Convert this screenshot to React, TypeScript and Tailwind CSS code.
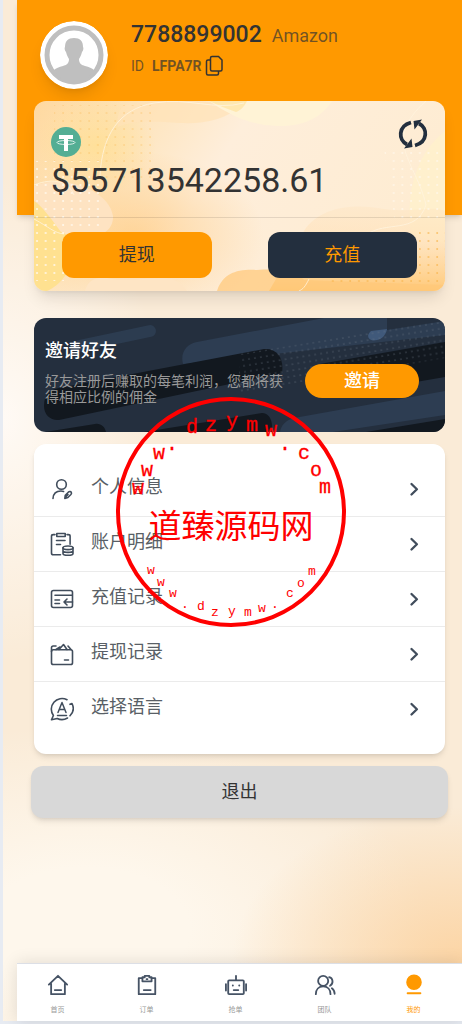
import type { ReactNode } from 'react';
import clsx from 'clsx';

type IconProps = { children: ReactNode; className?: string; strokeWidth?: number };

const Icon: React.FC<IconProps> = ({ children, className = 'size-6', strokeWidth = 1.6 }) => (
  <svg
    viewBox="0 0 24 24"
    fill="none"
    stroke="currentColor"
    strokeWidth={strokeWidth}
    strokeLinecap="round"
    strokeLinejoin="round"
    className={className}
    aria-hidden="true"
  >
    {children}
  </svg>
);

const menuItems = [
  {
    label: '个人信息',
    icon: (
      <>
        <circle cx="11.5" cy="7.5" r="4.8" />
        <path d="M3 21.500c.3-5 3.500-7.500 8-7.500 1 0 1.900.1 2.600.4" />
        <path d="m14.800 21.400.5-3.200 3-3c1-.9 2.500-.9 3 .1.400.8.2 1.500-.4 2.200l-3 3zM18 17.500l-1.800 1.900" />
      </>
    ),
  },
  {
    label: '账户明细',
    icon: (
      <>
        <path d="M5 2.600H3.300c-1 0-1.800.6-1.800 1.600v17c0 1 .8 1.600 1.800 1.600H10.500M17 2.600h1.300c1 0 1.800.6 1.800 1.600v8" />
        <path d="M6.800 4.500v-3h8.400v3zM6.500 8.500H15M6.500 12.500h4" />
        <ellipse cx="18" cy="15.800" rx="5" ry="1.800" />
        <path d="M13 15.800v5.600c0 1 2.200 1.800 5 1.800s5-.8 5-1.800v-5.600M13 18.600c0 1 2.200 1.800 5 1.800s5-.8 5-1.800" />
      </>
    ),
  },
  {
    label: '充值记录',
    icon: (
      <>
        <rect x="1.500" y="3.500" width="21" height="17" rx="2" />
        <path d="M5 8.200h17M5 13h4.500M5 16.500h4.500M22.500 15H14M17 12l-3 3 3 3" />
      </>
    ),
  },
  {
    label: '提现记录',
    icon: (
      <>
        <rect x="1.500" y="7.800" width="21" height="14.700" rx="1.800" />
        <path d="M1.500 9.500V5.800c0-1.200.6-1.800 1.700-1.800H6M6 7.500l4-2.500M9 7.500l4.500-5 3.500 5M18 4l3 3.500M14.500 18h4" />
      </>
    ),
  },
  {
    label: '选择语言',
    icon: (
      <>
        <path d="M17 2.700A10.700 10.700 0 0 0 3.400 18.500L1.500 22.800l5.700-1.300A10.700 10.700 0 0 0 17.500 21M20 18.800a10.700 10.700 0 0 0 2-12.300l-2 .8" />
        <path d="m8 15.500 4-10 4 10M9.300 12.500h5.400M7.500 18.500h9" strokeWidth="1.500" />
      </>
    ),
  },
];

const tabs = [
  {
    label: '首页',
    icon: <path d="m2 11.500 10-9.500 10 9.500M4.500 10.500v11.500h15v-11.500M8.500 17.500h7" />,
  },
  {
    label: '订单',
    icon: (
      <>
        <path d="M7 4.500H3v17.500h18V4.500h-4M8.500 17.500h7.500" />
        <path d="M9.500 2h5v1.500h2.500v4.500H7V3.500h2.500zM11.500 5.500h1" />
      </>
    ),
  },
  {
    label: '抢单',
    icon: (
      <>
        <rect x="3.500" y="7" width="17" height="15" rx="1" />
        <path d="M12 6.500V2M1 11v7M23 11v7M8.500 12.500h.1M15.500 12.500h.1M9.500 17.500h5" />
      </>
    ),
  },
  {
    label: '团队',
    icon: (
      <>
        <circle cx="10" cy="7.500" r="5.500" />
        <path d="M2 22c0-5 3.200-8.500 8-8.500s8 3.500 8 8.500M16.500 3.500c4.500 1 5 7 1 9.300M19.500 15.500c2 1.500 3 3.500 3 6" />
      </>
    ),
  },
  {
    label: '我的',
    active: true,
    icon: (
      <>
        <circle cx="12" cy="9" r="7.500" fill="currentColor" />
        <path d="M5 21h14" />
      </>
    ),
  },
];

// letters of the stamp: glyph, centre x, baseline y
const stampTop: [string, number, number][] = [
  ['w', 22, 97], ['w', 31, 79], ['w', 43, 62], ['.', 56, 53], ['d', 76, 36], ['z', 95, 34], ['y', 116, 30],
  ['m', 136, 34], ['w', 155, 39], ['.', 169, 53], ['c', 188, 62], ['o', 200, 79], ['m', 209, 96],
];
const stampBottom: [string, number, number][] = [
  ['w', 35, 177], ['w', 45, 189], ['w', 57, 200], ['.', 69, 211], ['d', 85, 213], ['z', 99, 219], ['y', 116, 218],
  ['m', 132, 219], ['w', 146, 215], ['.', 159, 211], ['c', 174, 200], ['o', 185, 190], ['m', 196, 178],
];

const Stamp = () => (
  <svg
    viewBox="0 0 230 230"
    fill="#f00"
    textAnchor="middle"
    className="pointer-events-none absolute top-[397px] left-1/2 size-[230px] -translate-x-1/2"
  >
    <circle cx="115" cy="115" r="113" fill="none" stroke="#f00" strokeWidth="4" />
    <g fontFamily="Liberation Mono, monospace" fontSize="20" stroke="#f00" strokeWidth="0.300">
      {stampTop.map(([c, x, y]) => <text key={x} x={x} y={y}>{c}</text>)}
    </g>
    <g fontFamily="Liberation Mono, monospace" fontSize="13">
      {stampBottom.map(([c, x, y]) => <text key={x} x={x} y={y}>{c}</text>)}
    </g>
    <text x="115" y="141" fontFamily="Noto Sans CJK SC, sans-serif" fontSize="33">道臻源码网</text>
  </svg>
);

const WalletArt = () => (
  <svg viewBox="0 0 411 190" preserveAspectRatio="none" className="absolute inset-0 size-full" aria-hidden="true">
    <defs>
      <linearGradient id="walletBase" x1="0" y1="0" x2="1" y2="0.300">
        <stop offset="0" stopColor="#ffd9a0" />
        <stop offset="0.220" stopColor="#fee3b8" />
        <stop offset="0.500" stopColor="#feeedb" />
        <stop offset="1" stopColor="#feecd2" />
      </linearGradient>
      <linearGradient id="walletWarm" x1="0" y1="0" x2="0" y2="1">
        <stop offset="0" stopColor="#ffe4c0" stopOpacity="0.400" />
        <stop offset="0.400" stopColor="#ffe2ba" stopOpacity="0.700" />
        <stop offset="1" stopColor="#ffc978" />
      </linearGradient>
      <radialGradient id="walletGlow">
        <stop offset="0" stopColor="#ffcf8b" />
        <stop offset="1" stopColor="#ffcf8b" stopOpacity="0" />
      </radialGradient>
      <radialGradient id="walletYellow">
        <stop offset="0" stopColor="#ffe09a" />
        <stop offset="1" stopColor="#ffe09a" stopOpacity="0" />
      </radialGradient>
      <pattern id="dotsOrange" width="8.700" height="8" patternUnits="userSpaceOnUse">
        <circle cx="3" cy="4" r="0.900" fill="#f9b54c" />
      </pattern>
      <pattern id="dotsWhite" width="8.700" height="8" patternUnits="userSpaceOnUse">
        <circle cx="3" cy="4" r="1" fill="#fff8ec" />
      </pattern>
    </defs>
    <rect width="411" height="190" fill="url(#walletBase)" />
    <ellipse cx="62" cy="45" rx="60" ry="50" fill="url(#walletYellow)" />
    <ellipse cx="100" cy="135" rx="130" ry="85" fill="url(#walletGlow)" opacity="0.800" />
    <path d="M90 4C130-2 180-1 206 5c-15 14-35 18-60 17-30-2-50-2-62 4-2-8 0-16 6-22" fill="#ffe2b8" opacity="0.700" />
    <path d="M175 0h123c-10 16-28 26-55 25-30-1-50-13-68-25" fill="#fff3d6" />
    <path d="M175 0h38c-3 6-6 9-11 11-9-3-18-7-27-11" fill="#ffe8b0" />
    <path d="M411 30c-28 22-40 60-34 103l34 10z" fill="#fff1cc" opacity="0.800" />
    <path d="M270 130c15-24 50-28 80-22 25 4 50-4 61 2v80H235z" fill="url(#walletWarm)" />
    <path d="M0 90c18 10 25 28 38 48 6 25-10 46-25 52H0z" fill="#ffe190" />
    <path d="M0 85c25-12 75 2 79 30 1 22-30 27-52 16C15 115 8 105 0 100z" fill="#fee3c2" />
    <path d="M51 190c3-10 9-14 22-13 22 5 45-2 65 1 8 4 13 8 15 12z" fill="#fee5c5" />
    <path d="M183 190c6-18 20-22 40-21 30-2 40 3 47 10l141 5v6z" fill="#ffc878" opacity="0.700" />
    <path d="M66 75C68 34 85 8 120 2s60 8 90 0M0 84c20-8 35-3 40 10M0 118c15 8 20 14 30 15M392 0c-45 40-10 60 0 104-10 30-40 15-60 30M275 178c-4 8-6 10-10 12" fill="none" stroke="#fff4de" strokeWidth="0.800" />
    <path d="M20 4h100v75H20z" fill="url(#dotsOrange)" opacity="0.350" />
    <path d="M0 60h65v70H30v50H0z" fill="url(#dotsWhite)" />
    <path d="M350 48h61v72h-50z" fill="url(#dotsWhite)" opacity="0.800" />
    <path d="M385 125h26v62H290l5-10h90z" fill="url(#dotsOrange)" opacity="0.800" />
  </svg>
);

const InviteArt = () => (
  <svg viewBox="0 0 411 114" preserveAspectRatio="none" className="absolute inset-0 size-full" aria-hidden="true">
    <defs>
      <pattern id="dotsGrey" width="6" height="6" patternUnits="userSpaceOnUse" patternTransform="rotate(-9)">
        <circle cx="2" cy="2" r="0.600" fill="#6d7884" />
      </pattern>
    </defs>
    <path d="m45 28 71-15" stroke="#2c3c50" strokeWidth="12" strokeLinecap="round" />
    <path d="M149 46c-3-12 4-20 14-22L290 0h63v12L411 3v14z" fill="#2d3d52" />
    <path d="M10 88c0-12 6-16 15-18L230 31c14-1 20 10 18 24L25 102c-8 1-15-5-15-14" fill="#12181f" />
    <path d="m11 114 50-8c6-1 10 3 11 8zM110 114l118-19c8 0 12 10 9 19z" fill="#12181f" />
    <path d="M286 46 411 24v35l-70 12z" fill="#12181f" />
    <path d="M246 114c1-7 6-12 14-14l151-27v24l-112 17z" fill="#2d3d52" />
    <path d="m332 114 79-13v13z" fill="#12181f" />
    <path d="M337 13 353 11c-1 6-5 10-10 11-8 2-12-4-6-9" fill="#40597a" />
    <path d="M205 36 411 2v38l-206 36z" fill="url(#dotsGrey)" />
  </svg>
);

const Profile = () => (
  <header className="flex h-[215px] gap-[23px] bg-[#ff9900] pt-[21px] pl-[23px] shadow-md">
    <svg viewBox="0 0 68 68" className="size-[68px] shrink-0 rounded-full shadow-lg" aria-label="avatar">
      <circle cx="34" cy="34" r="34" fill="#fff" />
      <circle cx="34" cy="34" r="27" fill="none" stroke="#bfbfbf" strokeWidth="5" />
      <path
        d="M34 17c6 0 9 3 9 9 1 1 0 4-1 5-1 4-2 5-3 7 0 5 3 6 6 7 4 1 7 2 9 4-5 8-11 13-20 13s-15-5-20-13c2-2 5-3 9-4 3-1 6-2 6-7-1-2-2-3-3-7-1-1-2-4-1-5 0-6 3-9 9-9"
        fill="#bfbfbf"
      />
    </svg>
    <div>
      <div className="flex items-baseline gap-2.5 leading-7">
        <span className="text-[23px] font-medium">7788899002</span>
        <span className="text-lg leading-7 text-[#333]/70">Amazon</span>
      </div>
      <div className="mt-1 flex items-center gap-1 text-sm text-[#333]/70">
        <span className="mr-1">ID</span>
        <span className="font-bold">LFPA7R</span>
        <button aria-label="复制" className="-ml-0.5 text-[#333]">
          <svg viewBox="0 0 20 24" fill="none" stroke="currentColor" strokeWidth="1.500" className="h-6 w-5">
            <path d="M8 2.500h6.500L18 6v9.500c0 1-.5 1.500-1.500 1.500H8c-1 0-1.500-.5-1.500-1.500V4c0-1 .5-1.500 1.500-1.500z" />
            <path d="M6.500 6H4c-1 0-1.500.5-1.500 1.500v12c0 1 .5 1.500 1.500 1.500h9c1 0 1.500-.5 1.500-1.500V17" />
          </svg>
        </button>
      </div>
    </div>
  </header>
);

const Wallet = () => (
  <section className="relative mx-[17px] -mt-[114px] h-[190px] overflow-hidden rounded-xl shadow-lg">
    <WalletArt />
    <div className="relative flex h-full flex-col">
      <div className="flex h-[117px] items-start justify-between border-b border-black/10 px-[17px] pt-[26px]">
        <div>
          <svg viewBox="0 0 30 30" className="size-[30px]" aria-label="USDT">
            <circle cx="15" cy="15" r="15" fill="#53ae94" />
            <path d="M8 8h14v4h-5v12h-4V12H8z" fill="#fff" />
            <ellipse cx="15" cy="15.500" rx="9" ry="2" fill="none" stroke="#fff" strokeWidth="0.800" />
          </svg>
          <p className="mt-[3px] text-[34px] leading-10">$55713542258.61</p>
        </div>
        <button aria-label="刷新" className="-mt-2 text-[#232f3e]">
          <svg viewBox="0 0 30 30" fill="none" stroke="currentColor" strokeWidth="3.800" className="size-[30px]">
            <path d="M13 3.500C0 7 0 21 9 25.500M17 26.500C30 23 30 9 21 4.500" />
            <path d="m6 29.500 8.500-1.500-1-8.500zM24 .5 15.500 2l1 8.500z" fill="currentColor" stroke="none" />
          </svg>
        </button>
      </div>
      <div className="grid grid-cols-2 gap-14 px-7 pt-3.5">
        <button className="h-[46px] rounded-xl bg-[#ff9900] text-lg">提现</button>
        <button className="h-[46px] rounded-xl bg-[#232f3e] text-lg text-[#ff9900]">充值</button>
      </div>
    </div>
  </section>
);

const Invite = () => (
  <section className="relative mx-[17px] mt-[27px] h-[114px] overflow-hidden rounded-xl bg-[#242f3e]">
    <InviteArt />
    <div className="relative flex h-full items-center justify-between pr-[26px] pl-[11px]">
      <div className="w-60 pb-2">
        <h2 className="text-lg font-medium text-white">邀请好友</h2>
        <p className="mt-2 text-sm leading-4 text-[#999]">好友注册后赚取的每笔利润，您都将获得相应比例的佣金</p>
      </div>
      <button className="mt-3 h-[34px] w-[114px] rounded-full bg-[#ff9900] text-lg font-medium text-white">邀请</button>
    </div>
  </section>
);

const Menu = () => (
  <ul className="mx-[17px] mt-3 rounded-xl bg-white py-[18px] shadow-md">
    {menuItems.map(({ label, icon }, i) => (
      <li key={label} className={clsx(i < menuItems.length - 1 && 'border-b border-[#ebebeb]')}>
        <a href="#" className="flex h-[54px] items-center pr-[21px] pl-4 text-[#414d5c]">
          <Icon>{icon}</Icon>
          <span className="flex-1 pb-1 pl-[17px] text-lg text-[#595f66]">{label}</span>
          <Icon className="size-5" strokeWidth={2.8}><path d="m9 6 6.500 6.300L9 18.600" /></Icon>
        </a>
      </li>
    ))}
  </ul>
);

const TabBar = () => (
  <nav className="mt-auto border-t border-[#dcdfe6] bg-white shadow-[0_0_16px_rgba(0,0,0,0.12)]">
    <div className="-ml-1 mr-1 grid h-[57px] grid-cols-5">
      {tabs.map(({ label, icon, active }) => (
        <a
          key={label}
          href="#"
          className={clsx('flex flex-col items-center pt-2.5', active ? 'text-[#ff9900]' : 'text-[#465365]')}
        >
          <Icon className="size-[22px]" strokeWidth={2}>{icon}</Icon>
          <span className={clsx('mt-2 text-[7px] leading-3', !active && 'text-[#999]')}>{label}</span>
        </a>
      ))}
    </div>
  </nav>
);

const App = () => (
  <div className="relative flex min-h-screen flex-col bg-[#e7ebf2] pb-[3px] pl-[3px] font-[Roboto,'Noto_Sans_CJK_SC',sans-serif] text-[#333]">
    <div className="flex flex-1 flex-col bg-[#faebd7] bg-[radial-gradient(ellipse_50%_15%_at_100%_94%,#fcd5a5,transparent),radial-gradient(ellipse_75%_20%_at_18%_91%,#fef7ec_30%,transparent),radial-gradient(ellipse_35%_24%_at_0%_41%,#fffaf5,transparent)] pl-[14px]">
      <Profile />
      <Wallet />
      <Invite />
      <Menu />
      <button className="mx-[14px] mt-3 h-[52px] rounded-xl bg-[#d8d8d8] text-lg shadow-md">退出</button>
      <TabBar />
    </div>
    <Stamp />
  </div>
);

export default App;
